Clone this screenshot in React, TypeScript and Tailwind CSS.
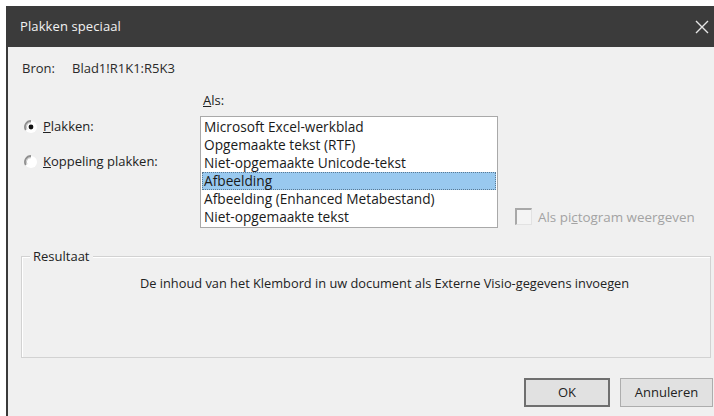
import React from "react";

const formats = [
  "Microsoft Excel-werkblad",
  "Opgemaakte tekst (RTF)",
  "Niet-opgemaakte Unicode-tekst",
  "Afbeelding",
  "Afbeelding (Enhanced Metabestand)",
  "Niet-opgemaakte tekst",
];

const Radio = ({ checked }: { checked?: boolean }) => (
  <svg width="14" height="14" viewBox="0 0 14 14" className="shrink-0">
    <circle cx="7" cy="7" r="6" fill="#ffffff" />
    <path d="M7 1 A6 6 0 0 0 1.8 10" fill="none" stroke="#8f8f8f" strokeWidth="1.8" />
    <path d="M7 2.6 A4.4 4.4 0 0 0 3 9.2" fill="none" stroke="#c4c4c4" strokeWidth="1" />
    {checked && <circle cx="7" cy="7" r="2.4" fill="#111111" />}
  </svg>
);

export default function App() {
  const selected = 3;

  return (
    <div
      className="w-[714px] h-[416px] bg-white overflow-hidden pl-[6px] pt-[6px]"
      style={{ fontFamily: '"Open Sans", "Noto Sans", sans-serif' }}
    >
      <div className="w-[708px] h-[410px] flex flex-col bg-[#f0f0f0] border-l-2 border-[#3a3a3a]">
        {/* title bar */}
        <div className="h-[41px] shrink-0 bg-[#3b3b3b] flex items-center justify-between pl-[12px] pr-[4px]">
          <span className="text-[13px] text-[#f2f2f2] tracking-[0.1px]">Plakken speciaal</span>
          <svg width="14" height="14" viewBox="0 0 14 14" className="mr-[1px]">
            <path d="M1 1 L13 13 M13 1 L1 13" stroke="#e6e6e6" strokeWidth="1.4" />
          </svg>
        </div>

        {/* source */}
        <div className="flex items-center h-[18px] mt-[13px] pl-[14px] text-[13px] text-[#2a2a2a]">
          <span className="w-[50px]">Bron:</span>
          <span>Blad1!R1K1:R5K3</span>
        </div>

        {/* options */}
        <div className="flex mt-[13px] pl-[16px]">
          <div className="flex flex-col gap-[17px] pt-[27px] w-[176px] text-[13px] text-[#222]">
            <label className="flex items-center gap-[5px] h-[18px]">
              <Radio checked />
              <span>
                <span className="underline">P</span>lakken:
              </span>
            </label>
            <label className="flex items-center gap-[5px] h-[18px]">
              <Radio />
              <span>
                <span className="underline">K</span>oppeling plakken:
              </span>
            </label>
          </div>

          <div className="flex flex-col">
            <span className="text-[13px] text-[#222] h-[18px] pl-[3px]">
              <span className="underline">A</span>ls:
            </span>
            <div className="mt-[7px] w-[298px] h-[112px] bg-white border border-[#a9a9a9] pt-[1px] px-[1px]">
              {formats.map((f, i) => (
                <div
                  key={f}
                  className={
                    i === selected
                      ? "h-[18px] leading-[16px] pl-[1px] text-[13.7px] text-[#1a1a1a] bg-[#99c9ef] border border-dotted border-[#5a7a94]"
                      : "h-[18px] leading-[18px] pl-[2px] text-[13.7px] text-[#1a1a1a]"
                  }
                >
                  {f}
                </div>
              ))}
            </div>
          </div>

          <div className="flex items-end pl-[17px] pb-[1px]">
            <label className="flex items-center gap-[6px] text-[13.4px] text-[#a3a3a3]">
              <span className="w-[17px] h-[17px] bg-[#f4f4f4] border-t-2 border-l-2 border-[#a8a8a8] border-r border-b border-r-[#e2e2e2] border-b-[#e2e2e2]" />
              <span>
                Als pi<span className="underline">c</span>togram weergeven
              </span>
            </label>
          </div>
        </div>

        {/* result group */}
        <div className="relative mt-[28px] ml-[13px] w-[690px] h-[102px] border border-[#d2d2d2] shadow-[inset_1px_1px_0_#ffffff]">
          <span className="absolute -top-[10px] left-[8px] px-[3px] bg-[#f0f0f0] text-[13px] text-[#222] leading-[18px]">
            Resultaat
          </span>
          <p className="mt-[17px] pl-[118px] text-[12.8px] text-[#222] leading-[18px]">
            De inhoud van het Klembord in uw document als Externe Visio-gegevens invoegen
          </p>
        </div>

        {/* buttons */}
        <div className="flex justify-end gap-[10px] mt-[20px] pr-[1px]">
          <button className="w-[86px] h-[29px] bg-[#e1e1e1] border-2 border-[#6f6f6f] text-[13px] text-[#222]">
            OK
          </button>
          <button className="w-[93px] h-[29px] bg-[#e1e1e1] border border-[#adadad] text-[13px] text-[#222]">
            Annuleren
          </button>
        </div>
      </div>
    </div>
  );
}
